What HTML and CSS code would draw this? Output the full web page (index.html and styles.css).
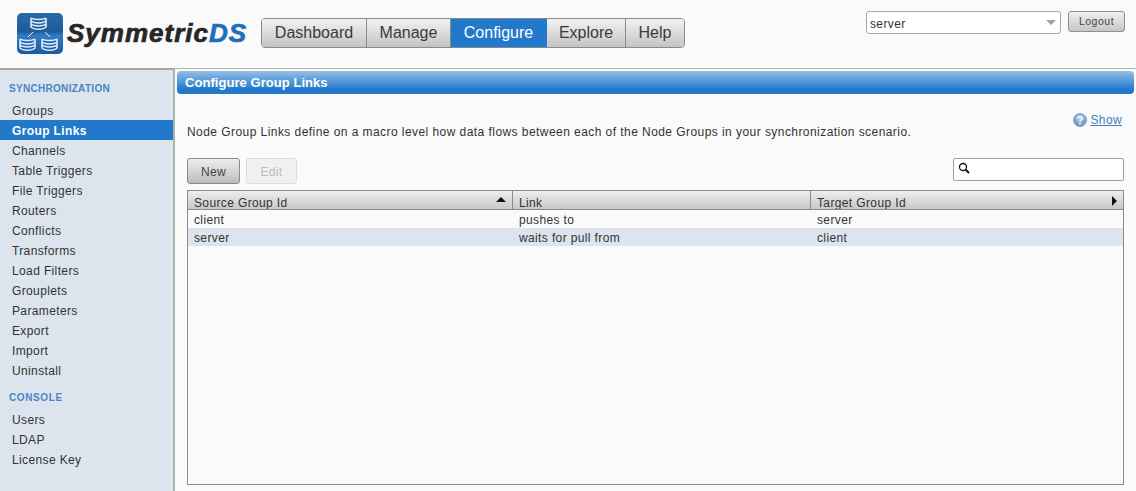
FILE: index.html
```html
<!DOCTYPE html>
<html lang="en">
<head>
<meta charset="utf-8">
<title>SymmetricDS</title>
<link rel="stylesheet" href="styles.css">
</head>
<body>
<header class="header">
  <div class="logo">
    <svg class="logo-icon" width="46" height="41" viewBox="0 0 46 41">
      <defs>
        <linearGradient id="lg" x1="0" y1="0" x2="0" y2="1">
          <stop offset="0" stop-color="#2a68a8"/>
          <stop offset=".45" stop-color="#1f5c9c"/>
          <stop offset=".55" stop-color="#2f7cc4"/>
          <stop offset="1" stop-color="#1a5a9e"/>
        </linearGradient>
      </defs>
      <rect x="0" y="0" width="46" height="41" rx="5" fill="url(#lg)"/>
      <g fill="none" stroke="#e4eef8" stroke-width="1.5">
        <path d="M14 5c3 2 12 2 15 0M14 5v9c3 3 12 3 15 0V5"/>
        <path d="M14 8c3 2.500 12 2.500 15 0M14 11c3 2.500 12 2.500 15 0"/>
        <path d="M3 26c3 2 12 2 15 0M3 26v9c3 3 12 3 15 0V26"/>
        <path d="M3 29c3 2.500 12 2.500 15 0M3 32c3 2.500 12 2.500 15 0"/>
        <path d="M25 26c3 2 12 2 15 0M25 26v9c3 3 12 3 15 0V26"/>
        <path d="M25 29c3 2.500 12 2.500 15 0M25 32c3 2.500 12 2.500 15 0"/>
        <path d="M16 19l-5 5M28 19l5 5" stroke-width="1"/>
      </g>
    </svg>
    <span class="logo-text">Symmetric<span class="logo-ds">DS</span></span>
  </div>
  <nav class="nav">
    <a class="nav-item">Dashboard</a>
    <a class="nav-item">Manage</a>
    <a class="nav-item active">Configure</a>
    <a class="nav-item">Explore</a>
    <a class="nav-item">Help</a>
  </nav>
  <div class="header-right">
    <div class="select"><span>server</span><i class="select-arrow"></i></div>
    <button class="logout">Logout</button>
  </div>
</header>
<div class="main">
  <aside class="sidebar">
    <h4 class="side-title">SYNCHRONIZATION</h4>
    <ul class="side-list">
      <li>Groups</li>
      <li class="selected">Group Links</li>
      <li>Channels</li>
      <li>Table Triggers</li>
      <li>File Triggers</li>
      <li>Routers</li>
      <li>Conflicts</li>
      <li>Transforms</li>
      <li>Load Filters</li>
      <li>Grouplets</li>
      <li>Parameters</li>
      <li>Export</li>
      <li>Import</li>
      <li>Uninstall</li>
    </ul>
    <h4 class="side-title console">CONSOLE</h4>
    <ul class="side-list">
      <li>Users</li>
      <li>LDAP</li>
      <li>License Key</li>
    </ul>
  </aside>
  <main class="content">
    <div class="title-bar">Configure Group Links</div>
    <div class="help-row">
      <svg width="14" height="14" viewBox="0 0 14 14">
        <defs>
          <radialGradient id="hg" cx=".5" cy=".35" r=".7">
            <stop offset="0" stop-color="#bcd4ec"/>
            <stop offset="1" stop-color="#4f86bd"/>
          </radialGradient>
        </defs>
        <circle cx="7" cy="7" r="6.500" fill="url(#hg)" stroke="#7fa6cc"/>
        <path d="M5 5.500c0-2.500 4.200-2.500 4.200 0 0 1.500-2.200 1.500-2.200 3" fill="none" stroke="#fff" stroke-width="1.500"/>
        <circle cx="7" cy="10.500" r="1" fill="#fff"/>
      </svg>
      <a class="show">Show</a>
    </div>
    <p class="desc">Node Group Links define on a macro level how data flows between each of the Node Groups in your synchronization scenario.</p>
    <div class="toolbar">
      <button class="btn">New</button>
      <button class="btn disabled">Edit</button>
      <div class="search">
        <svg width="12" height="12" viewBox="0 0 12 12">
          <circle cx="5" cy="5" r="3.500" fill="none" stroke="#111" stroke-width="1.300"/>
          <path d="M7.500 7.500L11 11" stroke="#111" stroke-width="2"/>
        </svg>
      </div>
    </div>
    <div class="grid">
      <div class="grid-row grid-head">
        <div class="cell col-1">Source Group Id<i class="sort-up"></i></div>
        <div class="cell col-2">Link</div>
        <div class="cell col-3">Target Group Id<i class="more-right"></i></div>
      </div>
      <div class="grid-row">
        <div class="cell col-1">client</div>
        <div class="cell col-2">pushes to</div>
        <div class="cell col-3">server</div>
      </div>
      <div class="grid-row alt">
        <div class="cell col-1">server</div>
        <div class="cell col-2">waits for pull from</div>
        <div class="cell col-3">client</div>
      </div>
    </div>
  </main>
</div>
</body>
</html>
```
FILE: styles.css
```css
* { box-sizing: border-box; }
html, body { height: 100%; }
body {
  margin: 0;
  background: #fafafa;
  color: #333;
  font-family: "Liberation Sans", Arial, sans-serif;
  font-size: 12px;
  letter-spacing: .37px;
  overflow: hidden;
  display: flex;
  flex-direction: column;
}
.header {
  height: 68px;
  flex: none;
  display: flex;
  align-items: flex-start;
  position: relative;
}
.logo {
  display: flex;
  align-items: center;
  margin: 13px 0 0 17px;
  width: 244px;
  height: 41px;
}
.logo-icon { flex: none; }
.logo-text {
  margin-left: 4px;
  font-size: 26px;
  font-weight: bold;
  font-style: italic;
  color: #262626;
  letter-spacing: 1px;
  -webkit-text-stroke: .7px currentColor;
  white-space: nowrap;
}
.logo-ds { color: #1f6fb9; }
.nav {
  display: flex;
  margin-top: 18px;
  height: 30px;
  border: 1px solid #8a8a8a;
  border-radius: 4px;
  overflow: hidden;
  width: 424px;
  letter-spacing: 0;
}
.nav-item {
  flex: none;
  display: flex;
  align-items: center;
  justify-content: center;
  font-size: 16px;
  color: #3a3a3a;
  background: linear-gradient(#f2f2f2, #c4c4c4);
  border-right: 1px solid #8a8a8a;
  width: 105px;
}
.nav-item:nth-child(2) { width: 84px; }
.nav-item:nth-child(3) { width: 96px; }
.nav-item:nth-child(4) { width: 79px; }
.nav-item:nth-child(5) { width: 58px; border-right: 0; }
.nav-item.active {
  background: #2279cb;
  color: #fff;
  border-right-color: #2279cb;
}
.header-right {
  margin-left: auto;
  margin-right: 11px;
  margin-top: 11px;
  display: flex;
  align-items: flex-start;
  gap: 7px;
}
.select {
  width: 195px;
  height: 23px;
  background: #fff;
  border: 1px solid #a8a8a8;
  border-radius: 3px;
  padding: 2px 4px 0 3px;
  display: flex;
  align-items: center;
  justify-content: space-between;
  font-size: 12px;
}
.select-arrow {
  width: 0;
  height: 0;
  margin: -2px 0 0 0;
  border-left: 5px solid transparent;
  border-right: 5px solid transparent;
  border-top: 5px solid #a0a0a0;
}
.logout {
  width: 57px;
  height: 21px;
  padding: 0 0 2px;
  font-family: inherit;
  font-size: 10.500px;
  letter-spacing: .5px;
  color: #444;
  border: 1px solid #8f8f8f;
  border-radius: 3px;
  background: linear-gradient(#f0f0f0, #c6c6c6);
}
.main {
  flex: 1;
  display: flex;
  min-height: 0;
  border-top: 1px solid #b4b4b4;
}
.sidebar {
  width: 175px;
  flex: none;
  background: #dce4ee;
  border-top: 2px solid #a8a8a8;
  margin-top: -1px;
  border-right: 2px solid #b0b0b0;
  padding-top: 12px;
}
.side-title {
  margin: 0 0 0 9px;
  height: 12px;
  line-height: 14px;
  font-size: 10px;
  font-weight: bold;
  color: #4a86c4;
  letter-spacing: .3px;
}
.side-title.console { margin: 11px 0 0 9px; letter-spacing: .6px; }
.side-list {
  list-style: none;
  margin: 6px 0 0;
  padding: 0;
}
.side-list li {
  height: 20px;
  line-height: 22px;
  padding-left: 12px;
  color: #333;
}
.side-list li.selected {
  background: #2279cb;
  color: #fff;
  font-weight: bold;
}
.content {
  flex: 1;
  min-width: 0;
  padding: 2px 2px 0 2px;
  display: flex;
  flex-direction: column;
}
.title-bar {
  height: 23px;
  line-height: 23px;
  padding-left: 8px;
  flex: none;
  color: #fff;
  font-size: 13px;
  font-weight: bold;
  letter-spacing: .05px;
  border-radius: 4px;
  background: linear-gradient(#95bfe6, #2279cb 80%);
}
.help-row {
  display: flex;
  justify-content: flex-end;
  align-items: center;
  gap: 4px;
  padding-right: 12px;
  margin-top: 18px;
  height: 16px;
}
.show {
  color: #3f80bd;
  text-decoration: underline;
}
.desc {
  margin: -2px 0 0 10px;
  height: 30px;
  line-height: 15px;
  color: #333;
  letter-spacing: .44px;
}
.toolbar {
  display: flex;
  align-items: flex-start;
  gap: 6px;
  margin: 4px 10px 0 10px;
  height: 34px;
}
.btn {
  width: 53px;
  height: 26px;
  padding: 2px 0 0;
  font-family: inherit;
  font-size: 12px;
  letter-spacing: .37px;
  color: #444;
  border: 1px solid #8a8a8a;
  border-radius: 3px;
  background: linear-gradient(#eee, #bdbdbd);
}
.btn.disabled {
  width: 51px;
  color: #bbb;
  border-color: #dcdcdc;
  background: #f0f0f0;
}
.search {
  margin-left: auto;
  width: 171px;
  height: 23px;
  background: #fff;
  border: 1px solid #a0a0a0;
  border-radius: 2px;
  padding: 3px 4px;
  display: flex;
  align-items: flex-start;
}
.grid {
  flex: none;
  height: 295px;
  margin: 0 10px 6px 10px;
  border: 1px solid #8a8a8a;
  background: #fafafa;
}
.grid-row {
  display: flex;
  height: 18px;
  line-height: 20px;
  overflow: hidden;
}
.grid-row.alt { background: #dce4ee; }
.grid-head {
  height: 19px;
  line-height: 24px;
  background: linear-gradient(#eee, #c8c8c8);
  border-bottom: 1px solid #8a8a8a;
}
.cell {
  padding-left: 6px;
  position: relative;
  white-space: nowrap;
}
.col-1 { width: 324px; }
.col-2 { width: 298px; padding-left: 7px; }
.col-3 { flex: 1; padding-left: 7px; }
.grid-head .cell + .cell { border-left: 1px solid #8a8a8a; padding-left: 6px; }
.sort-up {
  position: absolute;
  right: 6px;
  top: 6px;
  width: 0;
  height: 0;
  border-left: 5px solid transparent;
  border-right: 5px solid transparent;
  border-bottom: 5px solid #111;
}
.more-right {
  position: absolute;
  right: 6px;
  top: 5px;
  width: 0;
  height: 0;
  border-top: 5px solid transparent;
  border-bottom: 5px solid transparent;
  border-left: 5px solid #111;
}
```
